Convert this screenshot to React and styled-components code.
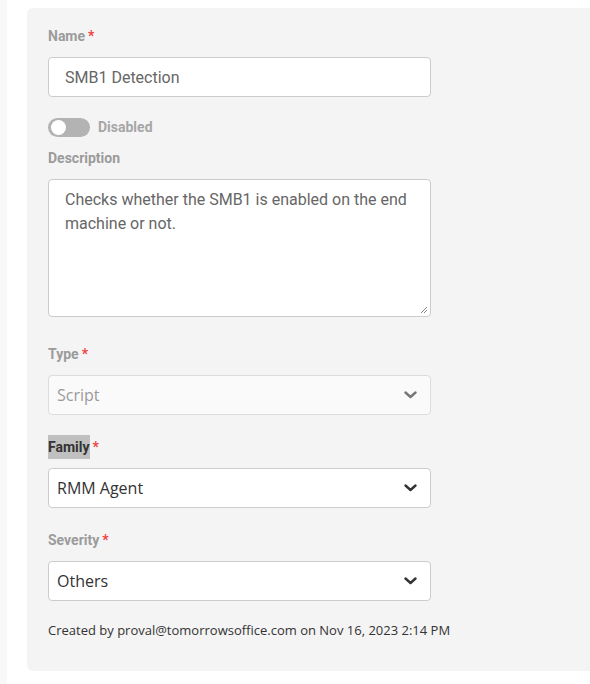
import styled, { createGlobalStyle } from "styled-components";

const GlobalStyle = createGlobalStyle`
  * { box-sizing: border-box; }
  html, body {
    margin: 0;
    padding: 0;
    background: #fff;
    overflow: hidden;
  }
`;

const Page = styled.div`
  display: flex;
  height: 684px;
  width: 590px;
  overflow: hidden;
`;

const Rail = styled.div`
  width: 7px;
  flex: none;
  background: #f8f8f8;
`;

const Main = styled.div`
  flex: none;
  padding: 8px 0 0 20px;
`;

const Card = styled.div`
  width: 620px;
  background: #f4f4f4;
  border-radius: 6px;
  padding: 16px 21px 32px;
  display: flex;
  flex-direction: column;
  font-family: Roboto, "Liberation Sans", sans-serif;
`;

const Label = styled.div`
  font-size: 14px;
  font-weight: 700;
  line-height: 24px;
  color: #9b9b9b;
  margin-top: ${({ $gap }) => $gap || 0}px;
  margin-bottom: 9px;
`;

const Selected = styled.span`
  display: inline-block;
  background: #c0c0c0;
  color: #333;
`;

const Req = styled.span`
  color: #ef4444;
  margin-left: 3px;
`;

const TextInput = styled.div`
  width: 383px;
  height: 40px;
  border: 1px solid #cccccc;
  border-radius: 4px;
  background: #fff;
  padding: 0 16px;
  display: flex;
  align-items: center;
  font-size: 16px;
  color: #666;
`;

const ToggleRow = styled.div`
  display: flex;
  align-items: center;
  gap: 8px;
  margin-top: 20px;
  height: 20px;
`;

const Track = styled.div`
  width: 42px;
  height: 19px;
  border-radius: 10px;
  background: #b3b3b3;
  padding: 2px 3px;
  display: flex;
  align-items: center;
`;

const Knob = styled.div`
  width: 15px;
  height: 15px;
  border-radius: 50%;
  background: #fff;
`;

const ToggleText = styled.span`
  font-size: 14px;
  font-weight: 700;
  color: #a6a6a6;
`;

const TextArea = styled.div`
  position: relative;
  width: 383px;
  height: 138px;
  border: 1px solid #cccccc;
  border-radius: 4px;
  background: #fff;
  padding: 8px 16px;
  font-size: 16px;
  line-height: 24px;
  color: #666;
`;

const Grip = styled.svg`
  position: absolute;
  right: 2px;
  bottom: 2px;
`;

const Select = styled.div`
  width: 383px;
  height: 40px;
  border: 1px solid ${({ $disabled }) => ($disabled ? "#dcdcdc" : "#cccccc")};
  border-radius: 4px;
  background: ${({ $disabled }) => ($disabled ? "#fafafa" : "#fff")};
  padding: 0 13px 0 8px;
  display: flex;
  align-items: center;
  justify-content: space-between;
  font-family: "Open Sans", "Liberation Sans", sans-serif;
  font-size: 16px;
  color: ${({ $disabled }) => ($disabled ? "#9a9a9a" : "#333")};
`;

const Meta = styled.div`
  margin-top: 20px;
  font-family: "Open Sans", "Liberation Sans", sans-serif;
  font-size: 13px;
  line-height: 18px;
  color: #333;
`;

function Chevron({ color }) {
  return (
    <svg width="13" height="8" viewBox="0 0 13 8">
      <path
        d="M1.5 1.5 L6.5 6 L11.5 1.5"
        fill="none"
        stroke={color}
        strokeWidth="2.4"
        strokeLinecap="round"
        strokeLinejoin="round"
      />
    </svg>
  );
}

function Dropdown({ value, disabled }) {
  return (
    <Select $disabled={disabled}>
      <span>{value}</span>
      <Chevron color={disabled ? "#777" : "#333"} />
    </Select>
  );
}

export default function App() {
  return (
    <Page>
      <GlobalStyle />
      <Rail />
      <Main>
        <Card>
          <Label>
            Name<Req>*</Req>
          </Label>
          <TextInput>SMB1 Detection</TextInput>

          <ToggleRow>
            <Track>
              <Knob />
            </Track>
            <ToggleText>Disabled</ToggleText>
          </ToggleRow>

          <Label $gap={9}>Description</Label>
          <TextArea>
            Checks whether the SMB1 is enabled on the end machine or not.
            <Grip width="9" height="9" viewBox="0 0 9 9">
              <path d="M8 2 L2 8 M8 5 L5 8" stroke="#888" strokeWidth="1" />
            </Grip>
          </TextArea>

          <Label $gap={25}>
            Type<Req>*</Req>
          </Label>
          <Dropdown value="Script" disabled />

          <Label $gap={20}>
            <Selected>Family</Selected>
            <Req>*</Req>
          </Label>
          <Dropdown value="RMM Agent" />

          <Label $gap={20}>
            Severity<Req>*</Req>
          </Label>
          <Dropdown value="Others" />

          <Meta>
            Created by proval@tomorrowsoffice.com on Nov 16, 2023 2:14 PM
          </Meta>
        </Card>
      </Main>
    </Page>
  );
}
